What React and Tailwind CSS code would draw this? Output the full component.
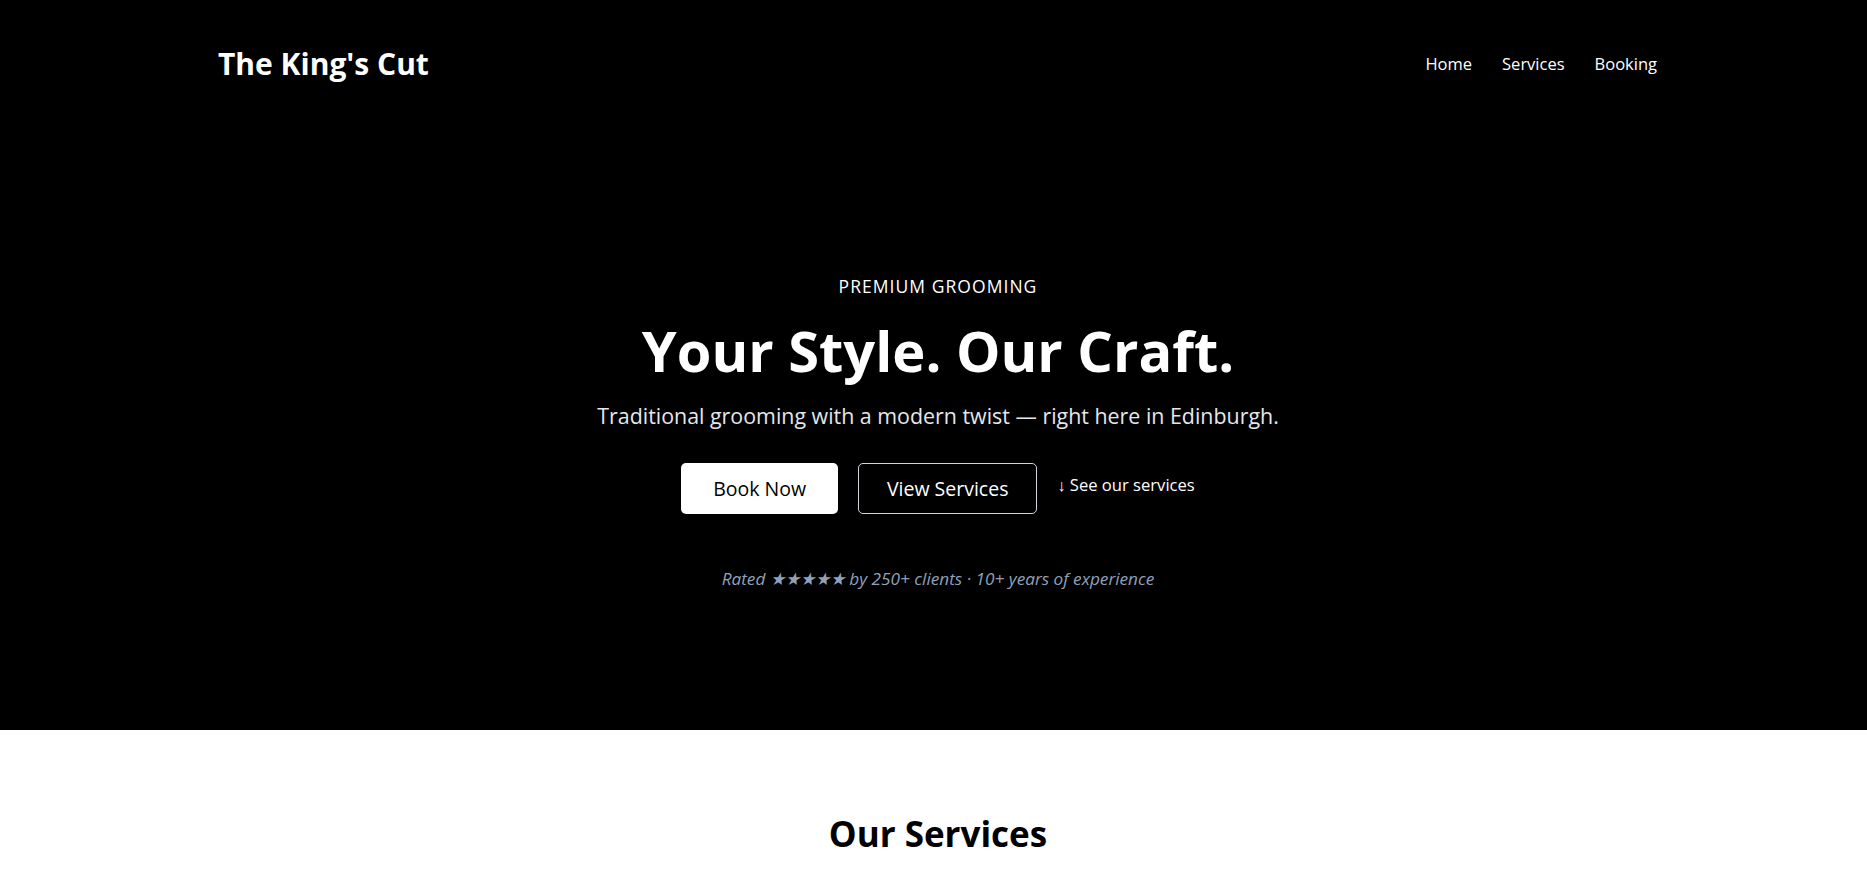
import React from "react";

export default function App() {
  const font = { fontFamily: '"Open Sans", "Noto Sans", Arial, sans-serif' };
  return (
    <div className="min-h-screen bg-white" style={font}>
      <section className="bg-black text-white">
        <header className="flex h-[128px] w-full items-center justify-between pl-[218px] pr-[210px]">
          <div className="text-[30px] font-bold leading-none">The King's Cut</div>
          <nav className="flex items-center gap-[30px] text-[16.5px]">
            <a href="#">Home</a>
            <a href="#">Services</a>
            <a href="#">Booking</a>
          </nav>
        </header>
        <div className="flex flex-col items-center pb-[139px] pl-[9px] pt-[146px] text-center">
          <p className="text-[17.5px] leading-[24px] tracking-[0.06em]">PREMIUM GROOMING</p>
          <h1 className="mt-[20px] text-[56px] font-bold leading-[64px]">Your Style. Our Craft.</h1>
          <p className="mt-[19px] text-[21.4px] leading-[30px] text-gray-200">
            Traditional grooming with a modern twist — right here in Edinburgh.
          </p>
          <div className="mt-[32px] flex items-center gap-5">
            <a href="#" className="flex h-[51px] w-[157px] items-center justify-center rounded-[5px] bg-white text-[19.5px] text-black">
              Book Now
            </a>
            <a href="#" className="flex h-[51px] w-[179px] items-center justify-center rounded-[5px] border border-gray-300 text-[19.5px] text-white">
              View Services
            </a>
            <a href="#" className="-mt-[7px] text-[16.6px] text-white">↓ See our services</a>
          </div>
          <p className="mt-[53px] text-[17.2px] italic leading-[24px] text-slate-400">
            Rated ★★★★★ by 250+ clients · 10+ years of experience
          </p>
        </div>
      </section>
      <section className="pl-[9px] pt-[83px] text-center">
        <h2 className="text-[35px] font-bold leading-[42px] text-black">Our Services</h2>
      </section>
    </div>
  );
}
